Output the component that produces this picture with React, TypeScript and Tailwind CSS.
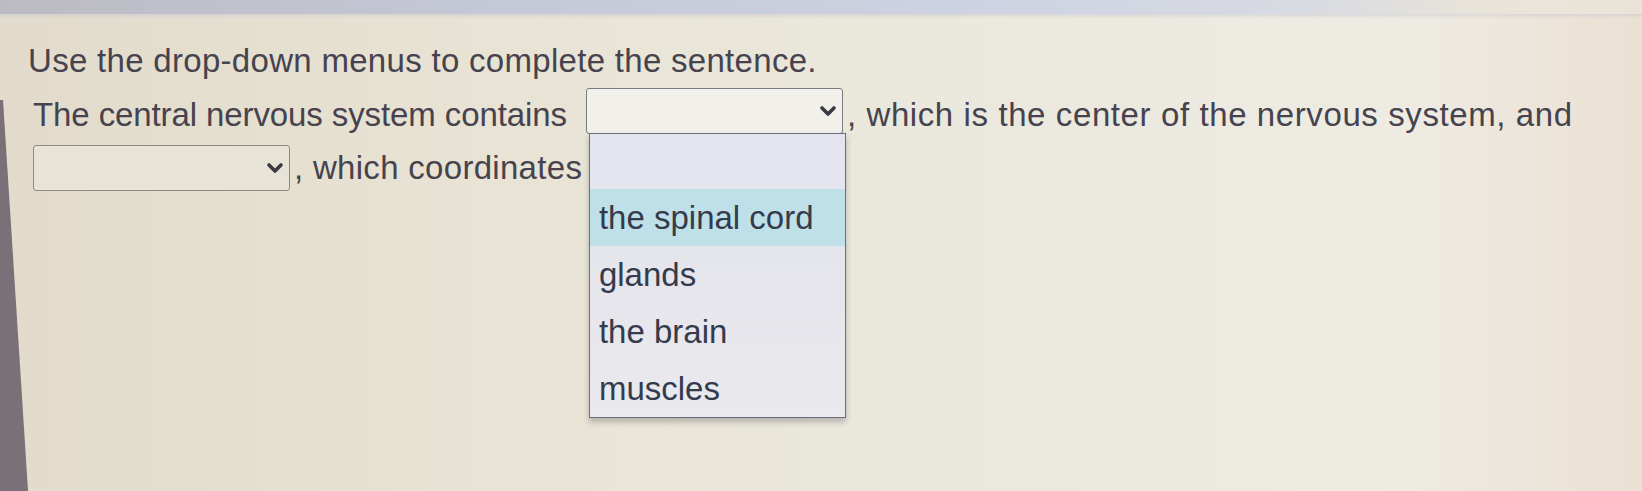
import React from "react";

/* ── Options for the open drop-down ── */
const options = ["", "the spinal cord", "glands", "the brain", "muscles"];

function Chevron() {
  return (
    <svg width="20" height="14" viewBox="0 0 20 14" className="shrink-0">
      <path
        d="M4 4l6 6 6-6"
        fill="none"
        stroke="#3b3a42"
        strokeWidth="3.6"
        strokeLinecap="round"
        strokeLinejoin="round"
      />
    </svg>
  );
}

function Select({
  className,
  children,
}: {
  className: string;
  children?: React.ReactNode;
}) {
  return (
    <div
      className={`relative flex h-[46px] w-[257px] shrink-0 items-center justify-end rounded-[3px] border-[1.5px] pr-[4px] ${className}`}
    >
      <Chevron />
      {children}
    </div>
  );
}

export default function App() {
  return (
    <div className="relative h-[491px] w-[1642px] overflow-hidden bg-[linear-gradient(90deg,#e2dbcb_0%,#e8e3d4_30%,#ebe9de_60%,#eeebe3_86%,#ebe0d3_100%)] font-['Liberation_Sans',Arial,sans-serif]">
      {/* top strip of the monitor */}
      <div className="h-[14px] bg-[linear-gradient(90deg,#bcbbc3_0%,#c6cad9_35%,#cdd3e2_60%,#d9dbe2_80%,#e9e4da_90%,#ebe3d8_100%)] shadow-[0_2px_3px_rgba(200,200,210,0.6)]" />

      {/* dark bezel edge on the left */}
      <svg
        className="pointer-events-none absolute left-0 top-0"
        width="40"
        height="491"
        viewBox="0 0 40 491"
      >
        <polygon points="0,100 3,100 28,491 0,491" fill="#7a7077" />
      </svg>

      <div className="pl-[28px] pt-[27px] text-[33px] leading-[40px] tracking-[0.3px] text-[#46434e]">
        <p>Use the drop-down menus to complete the sentence.</p>

        <div className="mt-[6px] pl-[5px]">
          {/* Line 1 */}
          <div className="flex items-center">
            <span className="mt-[8px] whitespace-nowrap tracking-[-0.1px]">
              The central nervous system contains
            </span>
            <Select className="ml-[19px] border-[#7c7b82] bg-[#f1f0ea]">
              {/* open menu */}
              <div className="absolute left-[2px] top-[44px] z-10 w-[257px] border-[1.5px] border-[#6c6f7a] bg-[linear-gradient(180deg,#e3e4ee,#e6e6ec_60%,#e9e9ee)] shadow-[0_4px_6px_rgba(80,80,90,0.35)]">
                {options.map((o, i) => (
                  <div
                    key={i}
                    className={`flex items-center pl-[9px] text-[33px] tracking-normal text-[#343b4c] ${
                      i === 0 ? "h-[55px]" : "h-[57px]"
                    } ${i === 1 ? "bg-[#bfe0e8]" : ""}`}
                  >
                    {o}
                  </div>
                ))}
              </div>
            </Select>
            <span className="ml-[4px] mt-[8px] whitespace-nowrap tracking-[0.6px]">
              , which is the center of the nervous system, and
            </span>
          </div>

          {/* Line 2 */}
          <div className="mt-[10px] flex items-center">
            <Select className="border-[#8c8a86] bg-[#e7e3d7]" />
            <span className="ml-[4px] whitespace-nowrap">, which coordinates</span>
          </div>
        </div>
      </div>
    </div>
  );
}
